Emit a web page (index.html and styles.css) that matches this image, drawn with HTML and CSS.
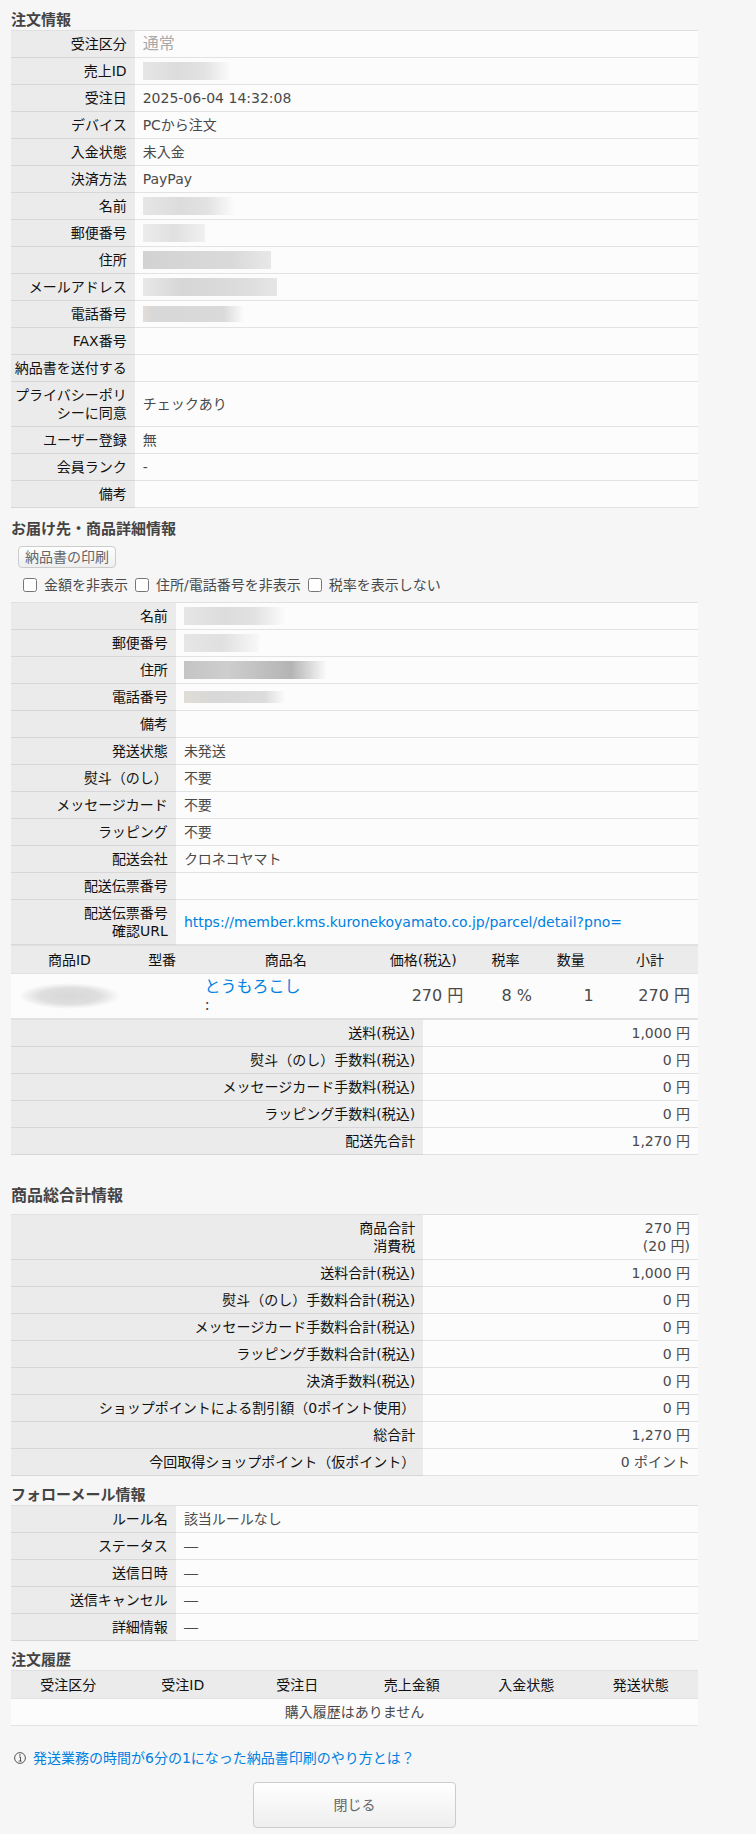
FILE: index.html
```html
<!DOCTYPE html>
<html lang="ja">
<head>
<meta charset="utf-8">
<title>注文情報</title>
<link rel="stylesheet" href="styles.css">
</head>
<body>
<main class="page">
  <h2 class="title">注文情報</h2>
  <table class="info order">
    <tr><th scope="row">受注区分</th><td class="kind">通常</td></tr>
    <tr><th scope="row">売上ID</th><td><span class="mask mask-id"></span></td></tr>
    <tr><th scope="row">受注日</th><td>2025-06-04 14:32:08</td></tr>
    <tr><th scope="row">デバイス</th><td>PCから注文</td></tr>
    <tr><th scope="row">入金状態</th><td>未入金</td></tr>
    <tr><th scope="row">決済方法</th><td>PayPay</td></tr>
    <tr><th scope="row">名前</th><td><span class="mask mask-name"></span></td></tr>
    <tr><th scope="row">郵便番号</th><td><span class="mask mask-zip"></span></td></tr>
    <tr><th scope="row">住所</th><td><span class="mask mask-address"></span></td></tr>
    <tr><th scope="row">メールアドレス</th><td><span class="mask mask-mail"></span></td></tr>
    <tr><th scope="row">電話番号</th><td><span class="mask mask-tel"></span></td></tr>
    <tr><th scope="row">FAX番号</th><td></td></tr>
    <tr><th scope="row">納品書を送付する</th><td></td></tr>
    <tr><th scope="row">プライバシーポリシーに同意</th><td>チェックあり</td></tr>
    <tr><th scope="row">ユーザー登録</th><td>無</td></tr>
    <tr><th scope="row">会員ランク</th><td>-</td></tr>
    <tr><th scope="row">備考</th><td></td></tr>
  </table>

  <h2 class="title title-delivery">お届け先・商品詳細情報</h2>
  <button class="btn btn-small" type="button">納品書の印刷</button>
  <div class="options">
    <input type="checkbox" id="hide-price"><label for="hide-price">金額を非表示</label>
    <input type="checkbox" id="hide-address"><label for="hide-address">住所/電話番号を非表示</label>
    <input type="checkbox" id="hide-tax"><label for="hide-tax">税率を表示しない</label>
  </div>
  <table class="info delivery">
    <tr><th scope="row">名前</th><td><span class="mask mask-name2"></span></td></tr>
    <tr><th scope="row">郵便番号</th><td><span class="mask mask-zip2"></span></td></tr>
    <tr><th scope="row">住所</th><td><span class="mask mask-address2"></span></td></tr>
    <tr><th scope="row">電話番号</th><td><span class="mask mask-tel2"></span></td></tr>
    <tr><th scope="row">備考</th><td></td></tr>
    <tr><th scope="row">発送状態</th><td>未発送</td></tr>
    <tr><th scope="row">熨斗（のし）</th><td>不要</td></tr>
    <tr><th scope="row">メッセージカード</th><td>不要</td></tr>
    <tr><th scope="row">ラッピング</th><td>不要</td></tr>
    <tr><th scope="row">配送会社</th><td>クロネコヤマト</td></tr>
    <tr><th scope="row">配送伝票番号</th><td></td></tr>
    <tr><th scope="row">配送伝票番号<br>確認URL</th><td><a href="#">https://member.kms.kuronekoyamato.co.jp/parcel/detail?pno=</a></td></tr>
  </table>
  <table class="info list products">
    <colgroup><col class="c-id"><col class="c-model"><col class="c-name"><col class="c-price"><col class="c-tax"><col class="c-qty"><col class="c-sum"></colgroup>
    <thead>
      <tr><th scope="col">商品ID</th><th scope="col">型番</th><th scope="col">商品名</th><th scope="col">価格(税込)</th><th scope="col">税率</th><th scope="col">数量</th><th scope="col">小計</th></tr>
    </thead>
    <tbody>
      <tr><td><span class="mask mask-product"></span></td><td></td><td class="name"><a href="#">とうもろこし</a><br>:</td><td>270 円</td><td>8 %</td><td>1</td><td>270 円</td></tr>
    </tbody>
  </table>
  <table class="info totals">
    <tr><th scope="row">送料(税込)</th><td>1,000 円</td></tr>
    <tr><th scope="row">熨斗（のし）手数料(税込)</th><td>0 円</td></tr>
    <tr><th scope="row">メッセージカード手数料(税込)</th><td>0 円</td></tr>
    <tr><th scope="row">ラッピング手数料(税込)</th><td>0 円</td></tr>
    <tr><th scope="row">配送先合計</th><td>1,270 円</td></tr>
  </table>

  <h2 class="title title-grand">商品総合計情報</h2>
  <table class="info totals">
    <tr><th scope="row">商品合計<br>消費税</th><td>270 円<br>(20 円)</td></tr>
    <tr><th scope="row">送料合計(税込)</th><td>1,000 円</td></tr>
    <tr><th scope="row">熨斗（のし）手数料合計(税込)</th><td>0 円</td></tr>
    <tr><th scope="row">メッセージカード手数料合計(税込)</th><td>0 円</td></tr>
    <tr><th scope="row">ラッピング手数料合計(税込)</th><td>0 円</td></tr>
    <tr><th scope="row">決済手数料(税込)</th><td>0 円</td></tr>
    <tr><th scope="row">ショップポイントによる割引額（0ポイント使用）</th><td>0 円</td></tr>
    <tr><th scope="row">総合計</th><td>1,270 円</td></tr>
    <tr><th scope="row">今回取得ショップポイント（仮ポイント）</th><td>0 ポイント</td></tr>
  </table>

  <h2 class="title title-sub">フォローメール情報</h2>
  <table class="info delivery">
    <tr><th scope="row">ルール名</th><td>該当ルールなし</td></tr>
    <tr><th scope="row">ステータス</th><td>―</td></tr>
    <tr><th scope="row">送信日時</th><td>―</td></tr>
    <tr><th scope="row">送信キャンセル</th><td>―</td></tr>
    <tr><th scope="row">詳細情報</th><td>―</td></tr>
  </table>

  <h2 class="title title-sub">注文履歴</h2>
  <table class="info list history">
    <thead>
      <tr><th scope="col">受注区分</th><th scope="col">受注ID</th><th scope="col">受注日</th><th scope="col">売上金額</th><th scope="col">入金状態</th><th scope="col">発送状態</th></tr>
    </thead>
    <tbody>
      <tr><td colspan="6">購入履歴はありません</td></tr>
    </tbody>
  </table>

  <p class="help">
    <svg class="help-icon" width="12" height="12" viewBox="0 0 12 12" aria-hidden="true"><circle cx="6" cy="6" r="5.4" fill="none" stroke="#444" stroke-width=".9"/><circle cx="6" cy="3" r=".8" fill="#444"/><path d="M5 5H6.5V9M4.6 9.1H7.6" fill="none" stroke="#444" stroke-width=".9"/></svg>
    <a href="#">発送業務の時間が6分の1になった納品書印刷のやり方とは？</a>
  </p>
  <button class="btn btn-close" type="button">閉じる</button>
</main>
</body>
</html>
```
FILE: styles.css
```css
* {
  box-sizing: border-box;
}

body {
  margin: 0;
  background: #f6f6f6;
  color: #4a4a4a;
  font-family: "DejaVu Sans", "Noto Sans CJK JP", sans-serif;
  font-size: 14px;
  line-height: 18px;
}

a {
  color: #0080e0;
  text-decoration: none;
}

.page {
  padding: 10px 58px 5px 11px;
}

.title {
  margin: 0;
  color: #444;
  font-size: 15px;
  line-height: 20px;
  font-weight: bold;
}

.title-delivery {
  margin: 11px 0 7px;
}

.title-grand {
  margin: 31px 0 8px;
  font-size: 16px;
}

.title-sub {
  margin-top: 9px;
}

/* Tables */
.info {
  width: 100%;
  table-layout: fixed;
  border-spacing: 0;
  border-top: 1px solid #e0e0e0;
}

.info th,
.info td {
  height: 27px;
  padding: 4px 8px;
  border-bottom: 1px solid #e2e2e2;
  background: #fcfcfc;
  text-align: left;
}

.info th {
  padding-left: 2px;
  border-bottom-color: #d7d7d7;
  background: #ebebeb;
  color: #111;
  font-weight: normal;
  text-align: right;
}

.order th {
  width: 18%;
}

.delivery th {
  width: 24%;
}

.info.totals th {
  width: 60%;
}

.info.totals td {
  text-align: right;
}

.info .kind {
  color: #aaa;
  font-size: 16px;
}

.info.list th {
  height: 28px;
  padding: 4px;
  border-bottom-color: #e2e2e2;
  text-align: center;
}

.info.products td {
  font-size: 16px;
  text-align: right;
}

.info.products .name {
  text-align: left;
}

.info.history td {
  text-align: center;
}

.c-id { width: 17%; }
.c-model { width: 10%; }
.c-name { width: 26%; }
.c-price { width: 14%; }
.c-tax { width: 10%; }
.c-qty { width: 9%; }
.c-sum { width: 14%; }

/* Obscured personal data */
.mask {
  display: block;
  height: 18px;
  background: linear-gradient(90deg, #e6e6e6, #dcdcdc 40%, #e2e2e2 70%, #fcfcfc);
}

.mask-id { width: 88px; }
.mask-name { width: 92px; }
.mask-zip { width: 62px; background: linear-gradient(90deg, #ececec, #e0e0e0 50%, #f0f0f0); }
.mask-address { width: 128px; background: linear-gradient(90deg, #d2d2d2, #dadada 70%, #e8e8e8); }
.mask-mail { width: 134px; background: linear-gradient(90deg, #e8e8e8, #d6d6d6 30%, #dedede 80%, #e6e6e6); }
.mask-tel { width: 101px; height: 16px; background: linear-gradient(90deg, #e2ddd6, #d8d8d8 10%, #dadada 80%, #fcfcfc); }
.mask-name2 { width: 102px; }
.mask-zip2 { width: 75px; background: linear-gradient(90deg, #e6e6e6, #e0e0e0 50%, #f8f8f8); }
.mask-address2 { width: 143px; background: linear-gradient(90deg, #c4c4c4, #cecece 30%, #b4b4b4 75%, #fcfcfc); }
.mask-tel2 { width: 101px; height: 12px; background: linear-gradient(90deg, #e0ddd6, #d8d8d8 30%, #dcdcdc 80%, #fcfcfc); }
.mask-product { width: 100%; height: 26px; background: radial-gradient(closest-side, #d8d8d8, #dedede 60%, #fcfcfc); }

/* Controls */
.btn {
  display: block;
  border: 1px solid #ccc;
  border-radius: 4px;
  background: linear-gradient(#fff, #eee);
  color: #666;
  font-family: inherit;
  font-size: 14px;
  line-height: 18px;
}

.btn-small {
  height: 22px;
  margin-left: 7px;
  padding: 0 6px;
}

.btn-close {
  width: 203px;
  height: 46px;
  margin: 14px auto 0;
}

.options {
  display: flex;
  flex-wrap: wrap;
  align-items: center;
  gap: 7px;
  min-height: 34px;
  padding-left: 12px;
}

.options input {
  width: 14px;
  height: 14px;
  margin: 0;
}

.help {
  display: flex;
  align-items: center;
  gap: 7px;
  margin: 22px 0 0;
  padding-left: 3px;
  line-height: 20px;
}

.help-icon {
  flex: none;
}
```
